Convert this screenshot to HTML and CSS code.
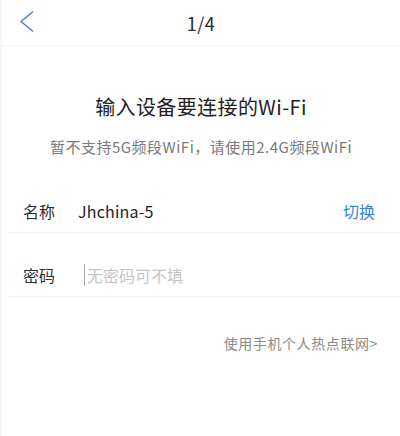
FILE: index.html
```html
<!DOCTYPE html>
<html lang="zh-CN">
<head>
    <meta charset="UTF-8">
    <meta name="viewport" content="width=device-width, initial-scale=1.0">
    <title>连接Wi-Fi</title>
    <link rel="stylesheet" href="styles.css">
</head>
<body>
    <div class="header">
        <div class="back">
            <svg width="16" height="22" viewBox="0 0 16 22">
                <polyline points="13.5,1 2,10.5 13.5,20" fill="none" stroke="#4a7fd2" stroke-width="1.6" stroke-linecap="round" stroke-linejoin="round"/>
            </svg>
        </div>
        <div class="step">1/4</div>
        <div></div>
    </div>

    <div class="intro">
        <h1>输入设备要连接的Wi-Fi</h1>
        <p>暂不支持5G频段WiFi，请使用2.4G频段WiFi</p>
    </div>

    <div class="form">
        <div class="row">
            <span class="label">名称</span>
            <span class="value">Jhchina-5</span>
            <span class="switch">切换</span>
        </div>
        <div class="row">
            <span class="label">密码</span>
            <span class="input"><span class="caret"></span>无密码可不填</span>
        </div>
    </div>

    <div class="hotspot">使用手机个人热点联网&gt;</div>
</body>
</html>
```

FILE: styles.css
```css
body {
    margin: 0;
    font-family: 'Noto Sans CJK SC', 'Noto Sans', sans-serif;
    background-color: #fff;
    color: #222;
    height: 436px;
    border-left: 2px solid #f6f6f6;
    box-sizing: border-box;
}

.header {
    height: 45px;
    display: grid;
    grid-template-columns: 1fr auto 1fr;
    align-items: center;
    border-bottom: 1px solid #f3f3f3;
}

.back {
    padding-left: 17px;
    display: flex;
    align-items: center;
    height: 22px;
    margin-top: -1px;
}

.step {
    font-size: 18px;
    color: #2a2a2a;
    line-height: 24px;
    letter-spacing: 0.5px;
}

.intro {
    text-align: center;
    padding-top: 47px;
}

.intro h1 {
    font-size: 20px;
    font-weight: 400;
    line-height: 28px;
    margin: 0;
    color: #222;
    letter-spacing: 0.4px;
}

.intro p {
    font-size: 15px;
    line-height: 22px;
    margin: 15px 0 0;
    color: #7a7a7a;
    letter-spacing: 0.5px;
}

.form {
    margin-top: 11px;
    margin-left: 6px;
}

.row {
    display: flex;
    align-items: center;
    padding: 31px 25px 10px 15px;
    line-height: 22px;
    font-size: 16px;
    border-bottom: 1px solid #f2f2f2;
}

.label {
    width: 55px;
    color: #2e2e2e;
}

.value {
    flex: 1;
    color: #222;
    letter-spacing: 0.2px;
}

.switch {
    color: #3c7ed6;
}

.input {
    display: flex;
    align-items: center;
    color: #c4c4c4;
    margin-left: 6px;
}

.caret {
    display: inline-block;
    width: 1px;
    height: 22px;
    background-color: #aaa;
    margin-right: 2px;
}

.hotspot {
    text-align: right;
    padding-right: 22px;
    margin-top: 36px;
    font-size: 14px;
    line-height: 20px;
    color: #8a8a8a;
    letter-spacing: 0.6px;
}
```
